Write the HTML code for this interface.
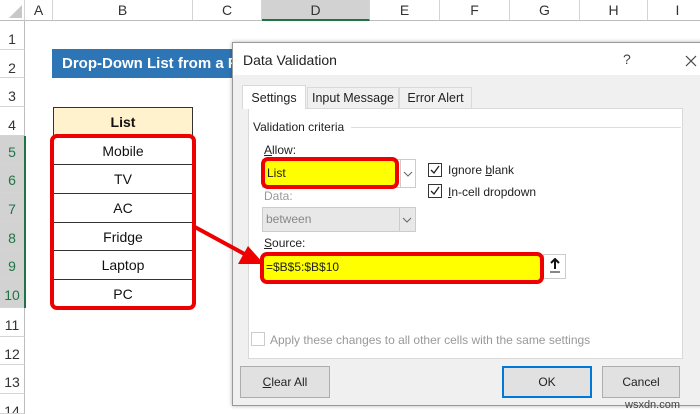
<!DOCTYPE html>
<html><head><style>
*{margin:0;padding:0;box-sizing:border-box}
html{width:700px;height:414px;overflow:hidden}
body{width:700px;height:414px;overflow:hidden;background:#fff;font-family:"Liberation Sans",sans-serif;position:relative}
.a{position:absolute}
.ch{top:0;height:21px;background:#fff;border-right:1px solid #d4d4d4;border-bottom:1px solid #bdbdbd;text-align:center;font-size:14px;line-height:21px;color:#333}
.rh{left:0;width:25px;border-bottom:1px solid #d4d4d4;border-right:1px solid #bdbdbd;text-align:center;font-size:14px;color:#333}
.cell{left:53px;width:140px;border:1px solid #333;text-align:center;font-size:14px;color:#111}
.dlg{font-size:12px;color:#222}
.btn{border:1px solid #adadad;background:#e1e1e1;text-align:center;font-size:12px;line-height:30px}
</style></head><body>
<div class="a ch" style="left:0;width:25px;background:#fff"></div>
<svg class="a" style="left:6px;top:5px" width="16" height="13"><polygon points="16,0 16,13 3,13" fill="#c8c8c8"/></svg>
<div class="a ch" style="left:25px;width:28px">A</div>
<div class="a ch" style="left:53px;width:140px">B</div>
<div class="a ch" style="left:193px;width:69px">C</div>
<div class="a ch" style="left:262px;width:108px;background:#d2d2d2;border-bottom:2px solid #217346">D</div>
<div class="a ch" style="left:370px;width:70px">E</div>
<div class="a ch" style="left:440px;width:70px">F</div>
<div class="a ch" style="left:510px;width:70px">G</div>
<div class="a ch" style="left:580px;width:68px">H</div>
<div class="a ch" style="left:648px;width:60px">I</div>
<div class="a rh" style="top:21px;height:29px;line-height:36px">1</div>
<div class="a rh" style="top:50px;height:28px;line-height:36px">2</div>
<div class="a rh" style="top:78px;height:29px;line-height:36px">3</div>
<div class="a rh" style="top:107px;height:29px;line-height:36px">4</div>
<div class="a rh" style="top:136px;height:28px;line-height:32px;background:#d2d2d2;color:#217346">5</div>
<div class="a rh" style="top:164px;height:29px;line-height:32px;background:#d2d2d2;color:#217346">6</div>
<div class="a rh" style="top:193px;height:29px;line-height:32px;background:#d2d2d2;color:#217346">7</div>
<div class="a rh" style="top:222px;height:28px;line-height:32px;background:#d2d2d2;color:#217346">8</div>
<div class="a rh" style="top:250px;height:29px;line-height:32px;background:#d2d2d2;color:#217346">9</div>
<div class="a rh" style="top:279px;height:29px;line-height:32px;background:#d2d2d2;color:#217346">10</div>
<div class="a rh" style="top:308px;height:29px;line-height:34px">11</div>
<div class="a rh" style="top:337px;height:28px;line-height:34px">12</div>
<div class="a rh" style="top:365px;height:29px;line-height:34px">13</div>
<div class="a rh" style="top:394px;height:20px;line-height:34px;overflow:hidden">14</div>
<div class="a" style="left:24px;top:136px;width:2px;height:172px;background:#217346"></div>
<div class="a" style="left:52px;top:49px;width:190px;height:29px;background:#2e75b6;color:#fff;font-weight:bold;font-size:15px;line-height:29px;padding-left:10px;white-space:nowrap;overflow:hidden">Drop-Down List from a Range</div>
<div class="a cell" style="top:107px;height:30px;background:#fff2cc;font-weight:bold;line-height:28px">List</div>
<div class="a cell" style="top:136px;height:29px;line-height:28px">Mobile</div>
<div class="a cell" style="top:164px;height:30px;line-height:28px">TV</div>
<div class="a cell" style="top:193px;height:30px;line-height:28px">AC</div>
<div class="a cell" style="top:222px;height:29px;line-height:28px">Fridge</div>
<div class="a cell" style="top:250px;height:30px;line-height:28px">Laptop</div>
<div class="a cell" style="top:279px;height:29px;line-height:28px">PC</div>
<div class="a" style="left:50px;top:134px;width:146px;height:176px;border:4px solid #e00;border-radius:7px"></div>
<div class="a dlg" style="left:232px;top:42px;width:480px;height:364px;background:#f0f0f0;border:1px solid #999;box-shadow:0 0 4px rgba(0,0,0,.3)">
 <div class="a" style="left:0;top:0;width:480px;height:32px;background:#fff"></div>
 <div class="a" style="left:10px;top:9px;font-size:14px">Data Validation</div>
 <div class="a" style="left:390px;top:8px;font-size:14px;color:#444">?</div>
 <svg class="a" style="left:452px;top:12px" width="12" height="12"><path d="M1 1L11 11M11 1L1 11" stroke="#444" stroke-width="1.2"/></svg>
 <div class="a" style="left:15px;top:65px;width:435px;height:251px;background:#fff;border:1px solid #d9d9d9"></div>
 <div class="a" style="left:9px;top:42px;width:64px;height:24px;background:#fff;border:1px solid #d9d9d9;border-bottom:none;text-align:center;line-height:24px;font-size:12.5px">Settings</div>
 <div class="a" style="left:74px;top:44px;width:92px;height:21px;border:1px solid #d9d9d9;border-bottom:none;text-align:center;line-height:21px;font-size:12.5px">Input Message</div>
 <div class="a" style="left:166px;top:44px;width:73px;height:21px;border:1px solid #d9d9d9;border-bottom:none;text-align:center;line-height:21px;font-size:12.5px">Error Alert</div>
 <div class="a" style="left:20px;top:77px;font-size:12px">Validation criteria</div>
 <div class="a" style="left:118px;top:84px;width:330px;height:1px;background:#ddd"></div>
 <div class="a" style="left:31px;top:100px;font-size:12px"><u>A</u>llow:</div>
 <div class="a" style="left:29px;top:116px;width:154px;height:29px;background:#fff;border:1px solid #ccc"></div>
 <div class="a" style="left:167px;top:117px;width:16px;height:27px;border-left:1px solid #ccc"></div>
 <svg class="a" style="left:170px;top:128px" width="10" height="6"><path d="M1 1L5 5L9 1" stroke="#666" fill="none"/></svg>
 <div class="a" style="left:28px;top:114px;width:138px;height:32px;background:#ff0;border:4px solid #e00;border-radius:7px;font-size:12px;line-height:24px;padding-left:2px">List</div>
 <div class="a" style="left:195px;top:120px;width:14px;height:14px;border:1px solid #333;background:#fff"></div>
 <svg class="a" style="left:196px;top:121px" width="12" height="12"><path d="M2 6L5 9L10 2" stroke="#222" fill="none" stroke-width="1.3"/></svg>
 <div class="a" style="left:215px;top:120px;font-size:12px">Ignore <u>b</u>lank</div>
 <div class="a" style="left:195px;top:141px;width:14px;height:14px;border:1px solid #333;background:#fff"></div>
 <svg class="a" style="left:196px;top:142px" width="12" height="12"><path d="M2 6L5 9L10 2" stroke="#222" fill="none" stroke-width="1.3"/></svg>
 <div class="a" style="left:215px;top:142px;font-size:12px"><u>I</u>n-cell dropdown</div>
 <div class="a" style="left:31px;top:146px;font-size:12px;color:#999">Data:</div>
 <div class="a" style="left:29px;top:164px;width:154px;height:25px;background:#e8e8e8;border:1px solid #ccc;color:#888;line-height:23px;padding-left:3px">between</div>
 <div class="a" style="left:166px;top:165px;width:16px;height:23px;border-left:1px solid #ccc"></div>
 <svg class="a" style="left:169px;top:174px" width="10" height="6"><path d="M1 1L5 5L9 1" stroke="#666" fill="none"/></svg>
 <div class="a" style="left:31px;top:193px;font-size:12px"><u>S</u>ource:</div>
 <div class="a" style="left:310px;top:211px;width:23px;height:25px;background:#fff;border:1px solid #ccc"></div>
 <svg class="a" style="left:316px;top:215px" width="12" height="16"><path d="M6 1L6 11M2 5L6 1L10 5" stroke="#111" stroke-width="2" fill="none"/><path d="M1 14H11" stroke="#111"/></svg>
 <div class="a" style="left:27px;top:209px;width:284px;height:32px;background:#ff0;border:4px solid #e00;border-radius:7px;font-size:12px;line-height:23px;padding-left:2px">=$B$5:$B$10</div>
 <div class="a" style="left:18px;top:289px;width:14px;height:14px;border:1px solid #ccc;background:#fff"></div>
 <div class="a" style="left:37px;top:290px;font-size:12px;color:#999">Apply these changes to all other cells with the same settings</div>
 <div class="a btn" style="left:7px;top:323px;width:90px;height:32px"><u>C</u>lear All</div>
 <div class="a btn" style="left:269px;top:323px;width:90px;height:32px;border:2px solid #0078d7;line-height:28px">OK</div>
 <div class="a btn" style="left:369px;top:323px;width:78px;height:32px">Cancel</div>
</div>
<svg class="a" style="left:0;top:0" width="700" height="414">
 <line x1="193" y1="226" x2="250" y2="257" stroke="#e00" stroke-width="4"/>
 <polygon points="264,264 238,264 248,246" fill="#e00"/>
</svg>
<div class="a" style="left:625px;top:399px;font-size:11px;color:#444">wsxdn.com</div>
</body></html>
